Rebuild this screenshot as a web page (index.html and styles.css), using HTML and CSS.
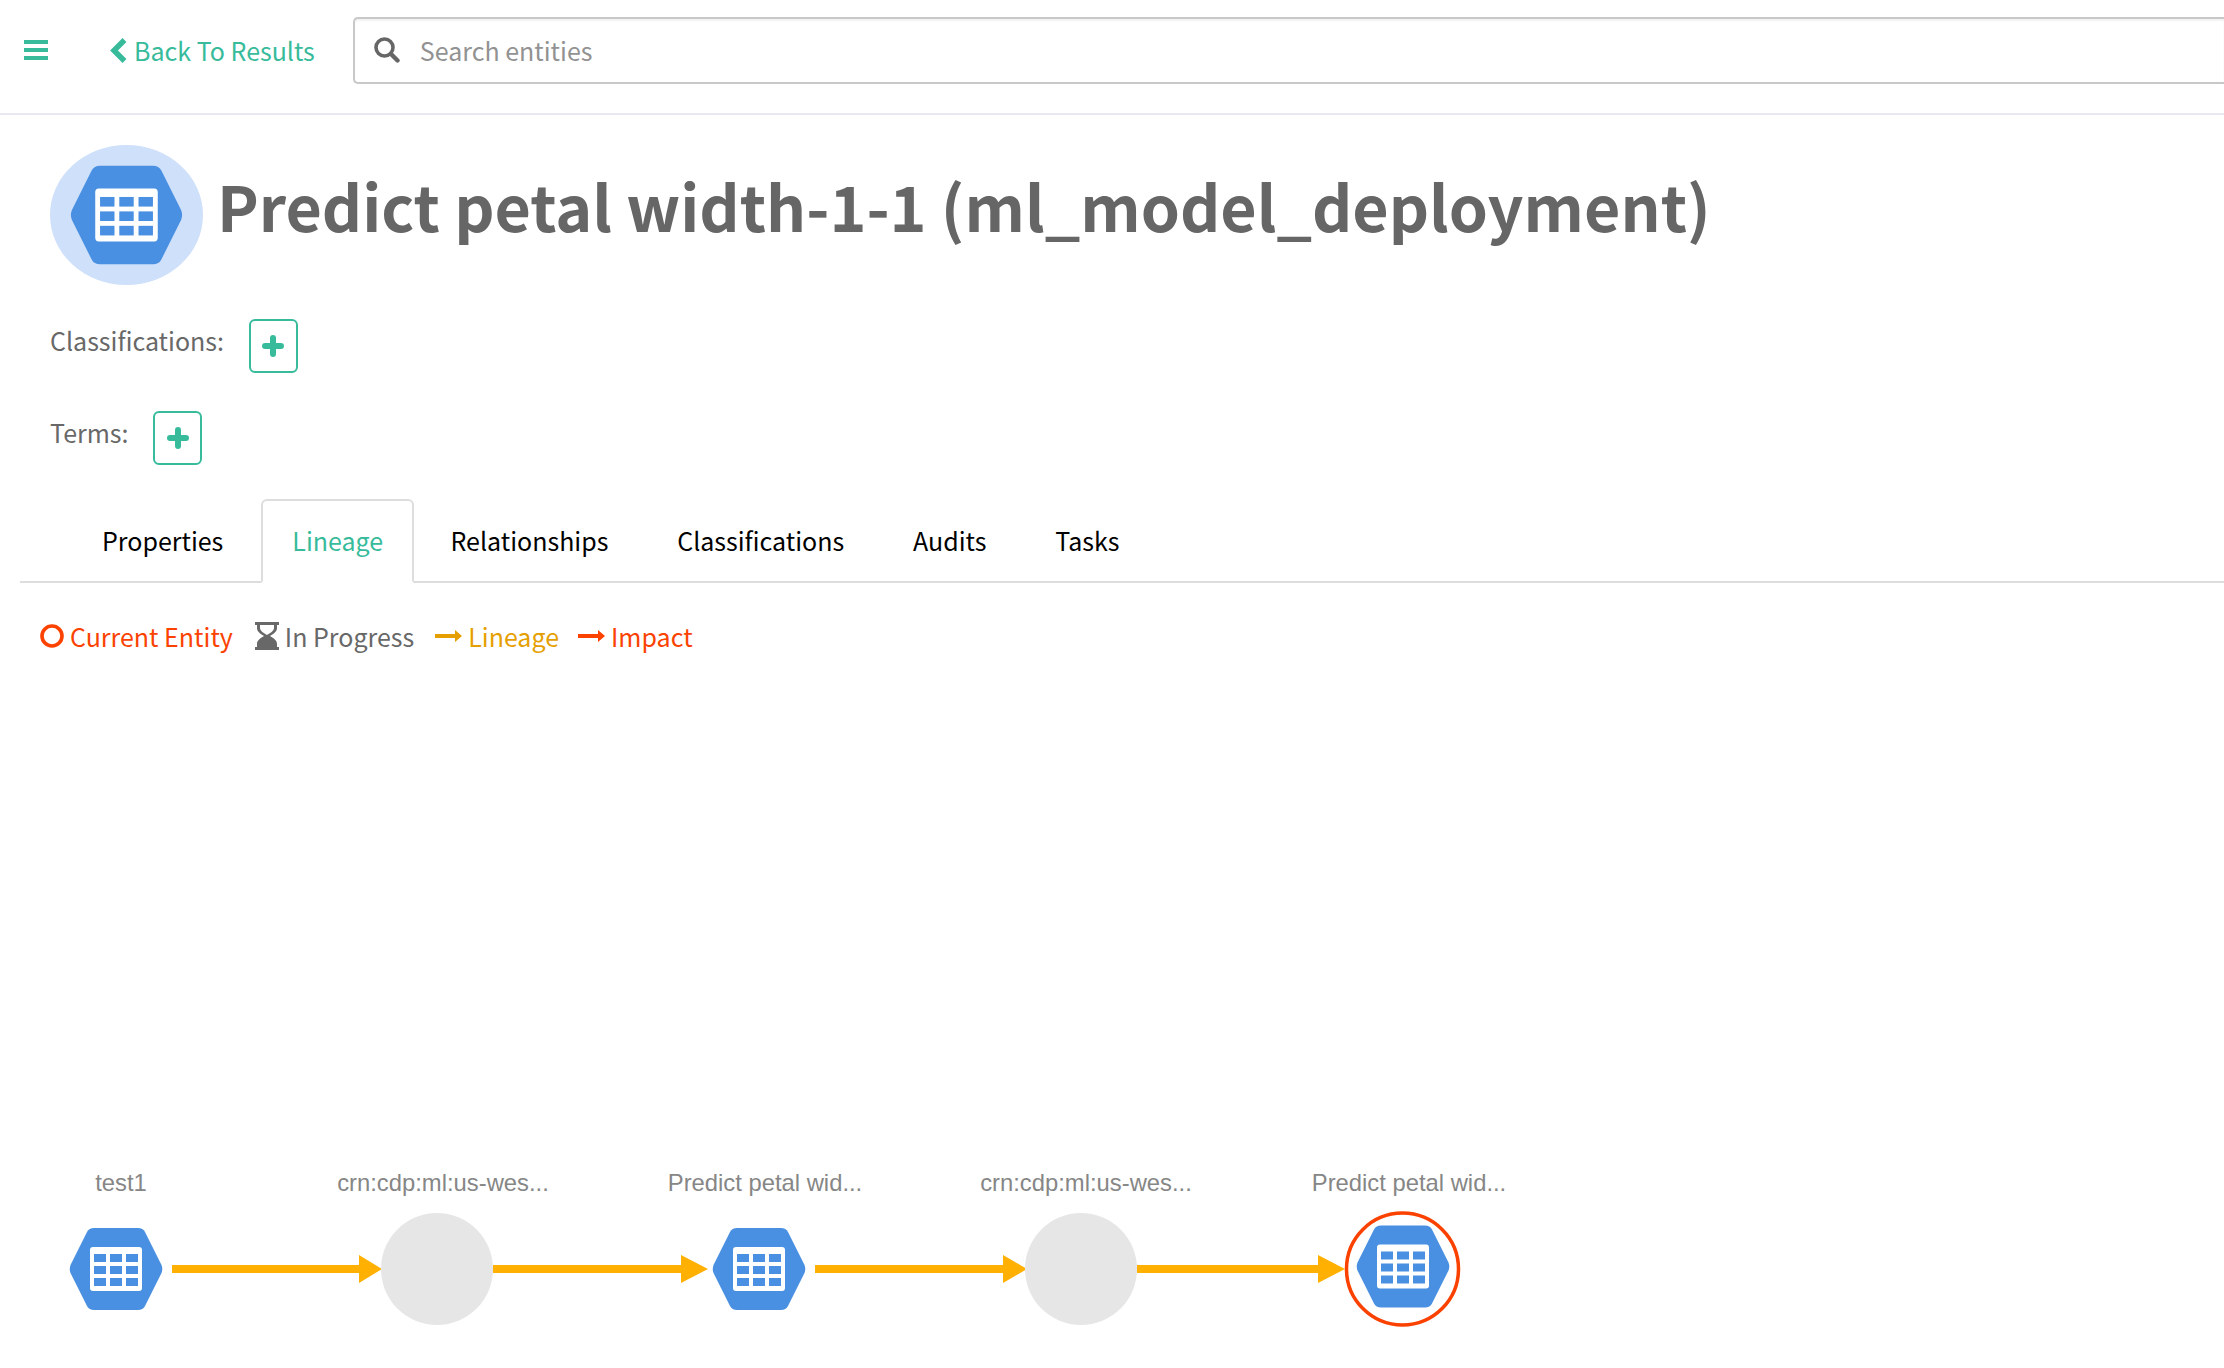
FILE: index.html
```html
<!DOCTYPE html>
<html lang="en">
<head>
    <meta charset="UTF-8">
    <title>Predict petal width-1-1</title>
    <link rel="stylesheet" href="styles.css">
</head>
<body>

<svg class="defs" width="0" height="0">
    <symbol id="hex" viewBox="0 0 94 82">
        <path fill="#4a90e2" d="M1.5 37 L18 4 Q20 0 25 0 H69 Q74 0 76 4 L92.5 37 Q94 41 92.5 45 L76 78 Q74 82 69 82 H25 Q20 82 18 78 L1.5 45 Q0 41 1.5 37Z"/>
        <rect x="21" y="19" width="52" height="44" rx="3" fill="#fff"/>
        <g fill="#4a90e2">
            <rect x="25" y="26" width="12" height="8"/><rect x="41" y="26" width="12" height="8"/><rect x="57" y="26" width="12" height="8"/>
            <rect x="25" y="38" width="12" height="8"/><rect x="41" y="38" width="12" height="8"/><rect x="57" y="38" width="12" height="8"/>
            <rect x="25" y="50" width="12" height="8"/><rect x="41" y="50" width="12" height="8"/><rect x="57" y="50" width="12" height="8"/>
        </g>
    </symbol>
</svg>

<header class="topbar">
    <svg class="menu-icon" width="24" height="20" viewBox="0 0 24 20"><path fill="#37bb9b" d="M0 0h24v4H0zM0 8h24v4H0zM0 16h24v4H0z"/></svg>
    <a class="back">
        <svg width="17" height="25" viewBox="0 0 17 25"><path fill="none" stroke="#37bb9b" stroke-width="5.5" d="M14.5 2 L4 12.5 L14.5 23"/></svg>
        Back To Results
    </a>
    <div class="search">
        <svg width="26" height="26" viewBox="0 0 26 26"><circle cx="10.5" cy="10.5" r="8.5" fill="none" stroke="#666" stroke-width="3.6"/><path stroke="#666" stroke-width="4.4" stroke-linecap="round" d="M17 17 L23.5 23.5"/></svg>
        <span>Search entities</span>
    </div>
</header>

<div class="title-row">
    <svg class="entity-icon" width="153" height="140" viewBox="0 0 153 140">
        <ellipse cx="76.5" cy="70" rx="76.5" ry="70" fill="#cfe0fa"/>
        <use href="#hex" x="20" y="20" width="113" height="100"/>
    </svg>
    <h1>Predict petal width-1-1 (ml_model_deployment)</h1>
</div>

<div class="tag-row first">
    <span>Classifications:</span>
    <button class="add-btn"><svg width="22" height="22" viewBox="0 0 22 22"><path stroke="#37bb9b" stroke-width="6" stroke-linecap="round" d="M11 3v16M3 11h16"/></svg></button>
</div>
<div class="tag-row">
    <span>Terms:</span>
    <button class="add-btn"><svg width="22" height="22" viewBox="0 0 22 22"><path stroke="#37bb9b" stroke-width="6" stroke-linecap="round" d="M11 3v16M3 11h16"/></svg></button>
</div>

<nav class="tabs">
    <a class="tab">Properties</a>
    <a class="tab active">Lineage</a>
    <a class="tab">Relationships</a>
    <a class="tab">Classifications</a>
    <a class="tab">Audits</a>
    <a class="tab">Tasks</a>
</nav>

<div class="legend">
    <span class="item red">
        <svg width="24" height="24" viewBox="0 0 24 24"><circle cx="12" cy="12" r="10" fill="none" stroke="#fb4200" stroke-width="3.6"/></svg>
        Current Entity
    </span>
    <span class="item grey">
        <svg width="24" height="28" viewBox="0 0 24 28"><path fill="#686868" fill-rule="evenodd" d="M0 0h24v3h-2v3c0 4-4 6-7 8 3 2 7 4 7 8v3h2v3H0v-3h2v-3c0-4 4-6 7-8-3-2-7-4-7-8V3H0zM5 3v3c0 3 4 5 7 7 3-2 7-4 7-7V3z"/><path fill="#686868" d="M12 15c-3 2-7 4-7 7v3h14v-3c0-3-4-5-7-7z"/></svg>
        In Progress
    </span>
    <span class="item amber">
        <svg width="27" height="12" viewBox="0 0 27 12"><path fill="#e59f00" d="M0 4h20V0l7 6-7 6V8H0z"/></svg>
        Lineage
    </span>
    <span class="item red impact">
        <svg width="27" height="12" viewBox="0 0 27 12"><path fill="#fb4200" d="M0 4h20V0l7 6-7 6V8H0z"/></svg>
        Impact
    </span>
</div>

<svg class="graph" width="2224" height="218" viewBox="0 1150 2224 218">
    <g class="node-label">
        <text x="121" y="1191">test1</text>
        <text x="443" y="1191">crn:cdp:ml:us-wes...</text>
        <text x="765" y="1191">Predict petal wid...</text>
        <text x="1086" y="1191">crn:cdp:ml:us-wes...</text>
        <text x="1409" y="1191">Predict petal wid...</text>
    </g>
    <g class="edges">
        <path d="M172 1269H360M493 1269H682M815 1269H1004M1137 1269H1319"/>
    </g>
    <g fill="#ffb000">
        <path d="M359 1255 L382 1269 L359 1283Z"/>
        <path d="M681 1255 L708 1269 L681 1283Z"/>
        <path d="M1003 1255 L1027 1269 L1003 1283Z"/>
        <path d="M1318 1255 L1345 1269 L1318 1283Z"/>
    </g>
    <use href="#hex" x="69" y="1228" width="94" height="82"/>
    <circle cx="437" cy="1269" r="56" fill="#e6e6e6"/>
    <use href="#hex" x="712" y="1228" width="94" height="82"/>
    <circle cx="1081" cy="1269" r="56" fill="#e6e6e6"/>
    <use href="#hex" x="1356" y="1225" width="94" height="83"/>
    <ellipse cx="1402.500" cy="1269" rx="56" ry="56" fill="none" stroke="#fb4100" stroke-width="3.500"/>
</svg>

</body>
</html>
```

FILE: styles.css
```css
body {
    margin: 0;
    font-family: "Noto Sans CJK SC", "Noto Sans", sans-serif;
    background: #fff;
    color: #686868;
    overflow: hidden;
    height: 1368px;
}
.defs {
    display: block;
    height: 0;
}
.topbar {
    display: flex;
    align-items: center;
    height: 113px;
    padding-left: 24px;
    border-bottom: 2px solid #e9e8f0;
}
.menu-icon {
    flex: none;
    margin-bottom: 13px;
}
.back {
    display: flex;
    flex: none;
    align-items: center;
    gap: 7px;
    margin: 0 0 13px 62px;
    color: #37bb9b;
    font-size: 25px;
    white-space: nowrap;
}
.search {
    display: flex;
    align-items: center;
    gap: 20px;
    flex: 1;
    box-sizing: border-box;
    height: 67px;
    margin: 0 0 13px 38px;
    padding-left: 19px;
    border: 2px solid #c8c8c8;
    border-right: none;
    border-radius: 5px 0 0 5px;
    box-shadow: inset 0 2px 2px #f2f2f2;
    color: #929292;
    font-size: 25px;
}
.title-row {
    display: flex;
    align-items: center;
    gap: 14px;
    padding: 30px 0 0 50px;
}
h1 {
    margin: 0 0 20px;
    font-size: 62.7px;
    font-weight: 700;
    line-height: 86px;
    color: #666;
}
.tag-row {
    display: flex;
    align-items: center;
    gap: 25px;
    height: 54px;
    margin-top: 38px;
    padding-left: 50px;
    font-size: 25px;
}
.tag-row.first {
    margin-top: 34px;
}
.tag-row span {
    margin-bottom: 12px;
}
.add-btn {
    display: flex;
    align-items: center;
    justify-content: center;
    width: 49px;
    height: 54px;
    padding: 0;
    background: #fff;
    border: 2px solid #37bb9b;
    border-radius: 6px;
}
.tabs {
    display: flex;
    height: 82px;
    margin: 34px 0 0 20px;
    padding-left: 82px;
    border-bottom: 2px solid #ddd;
    font-size: 25px;
    color: #000;
}
.tab {
    box-sizing: border-box;
    height: 84px;
    padding: 0 34.4px;
    line-height: 82px;
}
.tab:first-child {
    padding: 0 38px 0 0;
}
.tab.active {
    margin-right: 2px;
    padding: 0 29px;
    color: #37bb9b;
    background: #fff;
    border: 2px solid #ddd;
    border-bottom-color: #fff;
    border-radius: 6px 6px 0 0;
    line-height: 78px;
}
.legend {
    display: flex;
    align-items: center;
    gap: 21px;
    height: 40px;
    margin-top: 33px;
    padding-left: 40px;
    font-size: 25px;
}
.item {
    display: flex;
    align-items: center;
    gap: 6px;
}
.item.grey {
    margin-left: 1px;
}
.item.impact {
    margin-left: -2px;
}
.red {
    color: #fb4200;
}
.amber {
    color: #e59f00;
}
.grey {
    color: #686868;
}
.graph {
    display: block;
    margin-top: 494px;
}
.node-label text {
    font-family: "Liberation Sans", Arial, sans-serif;
    font-size: 23.8px;
    fill: #868686;
    text-anchor: middle;
}
.edges path {
    fill: none;
    stroke: #ffb000;
    stroke-width: 8;
}
```
